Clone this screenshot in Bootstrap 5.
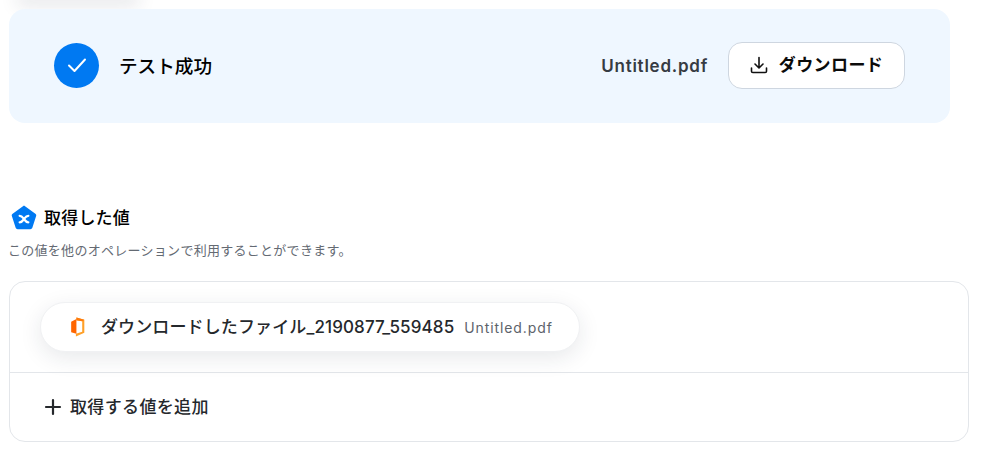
<!DOCTYPE html>
<html lang="ja">
<head>
    <meta charset="UTF-8">
    <meta name="viewport" content="width=device-width, initial-scale=1.0">
    <title>テスト成功</title>
    <link href="https://cdn.jsdelivr.net/npm/bootstrap@5.3.0/dist/css/bootstrap.min.css" rel="stylesheet">
    <style>
        html, body { height: 462px; overflow: hidden; }
        body {
            font-family: Inter, "Noto Sans CJK JP", sans-serif;
            color: #25282c;
            background: #fff;
            padding: 0 19px 0 9px;
        }
        .top-shade {
            height: 10px;
            margin: -10px 0 0 8px;
            width: 122px;
            box-shadow: 0 4px 18px rgba(30, 40, 60, .16);
        }
        .result-banner {
            width: 941px;
            height: 114px;
            margin-top: 9px;
            padding: 0 45px 2px;
            background: #eff7ff;
            border-radius: 16px;
        }
        .check-dot {
            width: 45px;
            height: 45px;
            background: #0079f2;
            border-radius: 50%;
        }
        .result-title {
            margin-left: 20px;
            padding-top: 3px;
            font-size: 18.6px;
            font-weight: 500;
            color: #000;
        }
        .file-name {
            margin-right: 20px;
            padding-top: 3px;
            font-size: 17px;
            font-weight: 600;
            color: #363b43;
            letter-spacing: .75px;
        }
        .dl-btn {
            width: 177px;
            height: 47px;
            background: #fff;
            border: 1px solid #ced6e0;
            border-radius: 14px;
            font-size: 17px;
            font-weight: 600;
            color: #0b0b0b;
            letter-spacing: .4px;
            padding: 0;
            gap: 11px;
        }
        .dl-btn span { padding-top: 1px; }
        .section-head {
            margin-top: 82px;
            height: 26px;
        }
        .head-icon { margin-left: 2px; }
        .section-title {
            margin-left: 7px;
            font-size: 17px;
            font-weight: 500;
            letter-spacing: .2px;
            color: #000;
            line-height: 24px;
        }
        .section-note {
            margin-top: 10px;
            margin-bottom: 22px;
            margin-left: -1px;
            font-size: 13px;
            line-height: 18px;
            letter-spacing: .28px;
            color: #646a73;
        }
        .value-box {
            height: 161px;
            border: 1px solid #e3e6ea;
            border-radius: 16px;
        }
        .value-top {
            height: 91px;
            padding: 20px 30px;
            border-bottom: 1px solid #e3e6ea;
        }
        .value-chip {
            width: 540px;
            height: 50px;
            padding-left: 29px;
            background: #fff;
            border: 1px solid #f0f1f3;
            border-radius: 25px;
            box-shadow: 0 6px 22px rgba(30, 40, 60, .1);
        }
        .chip-label {
            margin-left: 15px;
            padding-top: 2px;
            font-size: 17px;
            font-weight: 500;
            letter-spacing: .12px;
            color: #25282c;
        }
        .chip-value {
            margin-left: 10px;
            font-size: 14px;
            letter-spacing: .9px;
            color: #5d636b;
        }
        .add-row {
            height: 68px;
            padding-left: 34px;
            font-size: 17px;
            font-weight: 500;
            color: #25282c;
            letter-spacing: .35px;
        }
        .add-text { margin-left: 8px; padding-top: 1px; }
    </style>
</head>
<body>
    <div class="top-shade"></div>

    <div class="result-banner d-flex align-items-center">
        <div class="check-dot d-flex align-items-center justify-content-center">
            <svg width="20" height="20" viewBox="0 0 20 20" fill="none" stroke="#fff" stroke-width="2" stroke-linecap="round" stroke-linejoin="round"><path d="M2 10.5l5.5 5.5L18 4.500"/></svg>
        </div>
        <div class="result-title">テスト成功</div>
        <div class="file-name ms-auto">Untitled.pdf</div>
        <button type="button" class="btn dl-btn d-flex align-items-center justify-content-center">
            <svg width="18" height="18" viewBox="0 0 18 18" fill="none" stroke="#111" stroke-width="1.6" stroke-linecap="round" stroke-linejoin="round"><path d="M9 1.500v10M5 8l4 4 4-4M1.500 12v3.200c0 .7.500 1.300 1.300 1.300h12.400c.8 0 1.300-.6 1.300-1.300V12"/></svg>
            <span>ダウンロード</span>
        </button>
    </div>

    <div class="section-head d-flex align-items-center">
        <svg class="head-icon" width="26" height="26" viewBox="0 0 24 24"><path d="M12 .5l10.500 7.600c.7.500 1 1.300.7 2.100l-3.500 10.800c-.3.800-1 1.300-1.800 1.300H6.100c-.8 0-1.500-.5-1.800-1.300L.8 10.200c-.3-.8 0-1.600.7-2.100z" fill="#0079f2"/><path d="M8 10c2 0 2.500 1 4 3s2 3 4 3M16 10c-2 0-2.500 1-4 3s-2 3-4 3" fill="none" stroke="#fff" stroke-width="2.100" stroke-linecap="round"/></svg>
        <div class="section-title">取得した値</div>
    </div>
    <div class="section-note">この値を他のオペレーションで利用することができます。</div>

    <div class="value-box">
        <div class="value-top">
            <div class="value-chip d-flex align-items-center">
                <svg width="16" height="20" viewBox="0 0 15 19"><path d="M6 .5l7.500 2V15l-8 3.500V16l6-2V4L6 3z" fill="#ffa028"/><path d="M6 .5l7.500 2L11.500 4 6 3z" fill="#ff7a0a"/><path d="M1 4.500L6 2v14l-5-1.500z" fill="#ff6600"/></svg>
                <span class="chip-label">ダウンロードしたファイル_2190877_559485</span>
                <span class="chip-value">Untitled.pdf</span>
            </div>
        </div>
        <div class="add-row d-flex align-items-center">
            <svg width="18" height="18" viewBox="0 0 18 18" stroke="#25282c" stroke-width="2.200" stroke-linecap="round"><path d="M9 2v14M2 9h14"/></svg>
            <span class="add-text">取得する値を追加</span>
        </div>
    </div>
</body>
</html>
